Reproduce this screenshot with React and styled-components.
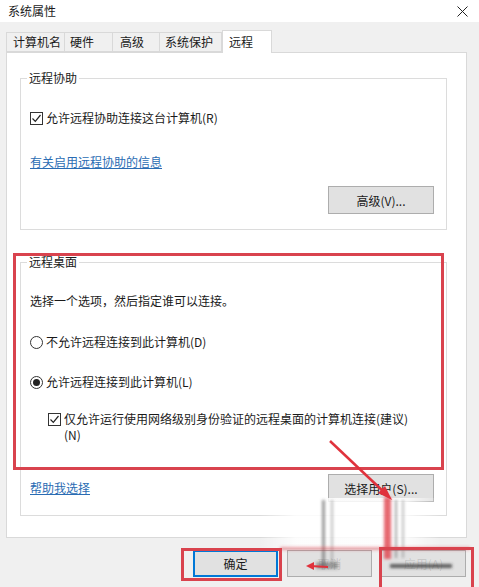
import React from 'react'
import styled, { createGlobalStyle } from 'styled-components'

const Global = createGlobalStyle`
  html, body {
    margin: 0;
    padding: 0;
    background: #f0f0f0;
  }
  body {
    font-family: 'Noto Sans CJK SC', 'Noto Sans', sans-serif;
    font-size: 12px;
    color: #1a1a1a;
  }
`

const Window = styled.div`
  position: relative;
  width: 479px;
  height: 587px;
  overflow: hidden;
  background: #f0f0f0;
  display: flex;
  flex-direction: column;
`

const TitleBar = styled.div`
  height: 22px;
  background: #fff;
  display: flex;
  align-items: center;
  justify-content: space-between;
  padding: 0 11px 0 8px;
  box-sizing: border-box;
  line-height: 16px;
`

const Body = styled.div`
  flex: 1;
  padding: 8px 12px 0 6px;
  display: flex;
  flex-direction: column;
`

const TabStrip = styled.div`
  display: flex;
  align-items: flex-end;
  height: 22px;
  position: relative;
  z-index: 1;
`

const Tab = styled.div`
  width: ${p => p.w}px;
  box-sizing: border-box;
  height: ${p => (p.active ? 23 : 20)}px;
  margin-bottom: ${p => (p.active ? -1 : 0)}px;
  padding-left: ${p => p.pad}px;
  display: flex;
  align-items: center;
  background: ${p => (p.active ? '#fff' : '#f0f0f0')};
  border: 1px solid #d9d9d9;
  border-bottom: ${p => (p.active ? 'none' : '1px solid #d9d9d9')};
  border-left: ${p => (p.first || p.active ? '1px solid #d9d9d9' : 'none')};
  line-height: 16px;
  white-space: nowrap;
`

const Panel = styled.div`
  background: #fff;
  border: 1px solid #d9d9d9;
  height: 486px;
  box-sizing: border-box;
  padding: 17px 19px 0 13px;
`

const Group = styled.fieldset`
  margin: ${p => p.mt}px 0 0 0;
  padding: 0 12px ${p => p.pb}px 9px;
  border: 1px solid #dcdcdc;
  min-width: 0;
`

const Legend = styled.legend`
  padding: 0 2px;
  margin-left: -3px;
  line-height: 16px;
`

const Row = styled.div`
  display: flex;
  align-items: ${p => (p.top ? 'flex-start' : 'center')};
  gap: 3px;
  margin-top: ${p => p.mt}px;
  margin-left: ${p => p.ml || 0}px;
  line-height: 16px;
`

const Spread = styled.div`
  display: flex;
  align-items: center;
  justify-content: space-between;
  margin-top: ${p => p.mt}px;
`

const Box = styled.span`
  width: 13px;
  height: 13px;
  flex: none;
  box-sizing: border-box;
  border: 1px solid #333;
  background: #fff;
  display: flex;
  align-items: center;
  justify-content: center;
  margin-top: ${p => (p.top ? 2 : 0)}px;
`

const Radio = styled.span`
  width: 13px;
  height: 13px;
  flex: none;
  box-sizing: border-box;
  border: 1px solid #333;
  border-radius: 50%;
  background: #fff;
  display: flex;
  align-items: center;
  justify-content: center;
  &::after {
    content: '';
    width: 7px;
    height: 7px;
    border-radius: 50%;
    background: ${p => (p.checked ? '#222' : 'transparent')};
  }
`

const LongLabel = styled.span`
  width: 352px;
`

const Link = styled.a`
  color: #2a6cb3;
  text-decoration: underline;
  line-height: 16px;
`

const Button = styled.button`
  width: ${p => p.w}px;
  height: ${p => p.h}px;
  box-sizing: border-box;
  background: #e1e1e1;
  border: 1px solid #adadad;
  font-family: inherit;
  font-size: 12px;
  color: ${p => (p.faded ? 'rgba(26,26,26,0.15)' : '#1a1a1a')};
  padding: 0;
  ${p => p.primary && 'border: 2px solid #0078d7;'}
`

const Footer = styled.div`
  display: flex;
  justify-content: flex-end;
  gap: 9px;
  padding: 12px 1px 0 0;
`

const Overlay = styled.svg`
  position: absolute;
  left: 0;
  top: 0;
  pointer-events: none;
`

const Check = () => (
  <svg width="11" height="11" viewBox="0 0 11 11">
    <path d="M1.5 5.5 L4.3 8.3 L9.5 2" fill="none" stroke="#222" strokeWidth="1.2" />
  </svg>
)

const tabs = [
  { label: '计算机名', w: 59, pad: 6 },
  { label: '硬件', w: 48, pad: 5 },
  { label: '高级', w: 47, pad: 7 },
  { label: '系统保护', w: 62, pad: 5 },
  { label: '远程', w: 50, pad: 6, active: true }
]

export default function App () {
  return (
    <Window>
      <Global />
      <TitleBar>
        <span>系统属性</span>
        <svg width="11" height="11" viewBox="0 0 11 11">
          <path d="M0.5 0.5 L10.5 10.5 M10.5 0.5 L0.5 10.5" stroke="#222" strokeWidth="1" />
        </svg>
      </TitleBar>
      <Body>
        <TabStrip>
          {tabs.map((t, i) => (
            <Tab key={t.label} w={t.w} pad={t.pad} active={t.active} first={i === 0}>
              {t.label}
            </Tab>
          ))}
        </TabStrip>
        <Panel>
          <Group mt={0} pb={15}>
            <Legend>远程协助</Legend>
            <Row mt={24}>
              <Box><Check /></Box>
              <span>允许远程协助连接这台计算机(R)</span>
            </Row>
            <Row mt={28}>
              <Link>有关启用远程协助的信息</Link>
            </Row>
            <Spread mt={16}>
              <span />
              <Button w={106} h={28}>高级(V)...</Button>
            </Spread>
          </Group>
          <Group mt={24} pb={13}>
            <Legend>远程桌面</Legend>
            <Row mt={23}>
              <span>选择一个选项，然后指定谁可以连接。</span>
            </Row>
            <Row mt={25}>
              <Radio />
              <span>不允许远程连接到此计算机(D)</span>
            </Row>
            <Row mt={24}>
              <Radio checked />
              <span>允许远程连接到此计算机(L)</span>
            </Row>
            <Row mt={21} ml={18} top>
              <Box top><Check /></Box>
              <LongLabel>仅允许运行使用网络级别身份验证的远程桌面的计算机连接(建议)(N)</LongLabel>
            </Row>
            <Spread mt={31}>
              <Link>帮助我选择</Link>
              <Button w={106} h={28}>选择用户(S)...</Button>
            </Spread>
          </Group>
        </Panel>
        <Footer>
          <Button w={85} h={27} primary>确定</Button>
          <Button w={85} h={27} faded>取消</Button>
          <Button w={85} h={27} faded>应用(A)</Button>
        </Footer>
      </Body>
      <Overlay width="479" height="587" viewBox="0 0 479 587">
        <defs>
          <filter id="soft" x="-20%" y="-20%" width="140%" height="140%">
            <feGaussianBlur stdDeviation="1.4" />
          </filter>
          <linearGradient id="fade" x1="0" y1="0" x2="1" y2="0">
            <stop offset="0" stopColor="#fff" stopOpacity="0" />
            <stop offset="0.2" stopColor="#fff" stopOpacity="0.85" />
            <stop offset="0.8" stopColor="#fff" stopOpacity="0.85" />
            <stop offset="1" stopColor="#fff" stopOpacity="0" />
          </linearGradient>
        </defs>
        <rect x="14.5" y="254.5" width="428" height="214" fill="none" stroke="#d9434e" strokeWidth="3" />
        <rect x="260" y="498" width="180" height="50" fill="url(#fade)" />
        <g filter="url(#soft)">
          <rect x="322" y="500" width="3" height="68" fill="#555" opacity="0.6" />
          <rect x="331" y="500" width="2" height="64" fill="#777" opacity="0.5" />
          <rect x="384" y="497" width="7" height="62" fill="#e0424c" opacity="0.8" />
          <rect x="395" y="500" width="2" height="58" fill="#666" opacity="0.6" />
          <rect x="402" y="500" width="2" height="58" fill="#777" opacity="0.5" />
          <rect x="280" y="547" width="190" height="3" fill="#d9434e" opacity="0.5" />
          <rect x="316" y="562" width="22" height="7" fill="#444" opacity="0.45" />
          <rect x="390" y="564" width="62" height="4" fill="#333" opacity="0.75" />
        </g>
        <line x1="330" y1="441" x2="386" y2="494" stroke="#e0323c" strokeWidth="2.5" />
        <path d="M392 500 L378 493 L385 486 Z" fill="#e0323c" />
        <line x1="310" y1="566" x2="328" y2="567" stroke="#e0323c" strokeWidth="2" />
        <path d="M306 566 L314 562 L314 570 Z" fill="#e0323c" />
        <rect x="182.5" y="549.5" width="98" height="30" fill="none" stroke="#d9434e" strokeWidth="3" />
        <rect x="380.5" y="548.5" width="92" height="42" fill="none" stroke="#d9434e" strokeWidth="3" />
      </Overlay>
    </Window>
  )
}
